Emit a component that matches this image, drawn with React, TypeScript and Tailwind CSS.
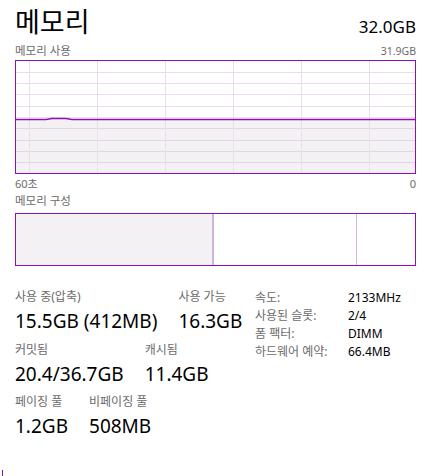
const font = { fontFamily: '"Segoe UI", "Noto Sans", "Noto Sans CJK KR", sans-serif' };

function UsageChart() {
  const w = 400;
  const h = 112;
  const vx = [13, 81, 149, 217, 285, 353];
  const hy = [11, 22, 33, 45, 56, 67, 79, 90, 101];
  const lineY = 58;
  return (
    <div className="border border-[#8b12ae] h-[114px] w-[401px]">
      <svg width={w - 1} height={h} viewBox={`0 0 ${w - 1} ${h}`} className="block">
        <path d={`M0 ${lineY} L${w} ${lineY} L${w} ${h} L0 ${h} Z`} fill="#f3f1f4" />
        {hy.map(y => (
          <line key={y} x1={0} x2={w} y1={y + 0.5} y2={y + 0.5} stroke={y > lineY ? '#e2d6e6' : '#eddbf2'} strokeWidth={1} />
        ))}
        {vx.map(x => (
          <line key={x} x1={x + 0.5} x2={x + 0.5} y1={0} y2={h} stroke="#ecdcef" strokeWidth={1} />
        ))}
        <path d={`M0 ${lineY + 0.5} L30 ${lineY + 0.5} L36 ${lineY - 0.5} L50 ${lineY - 0.5} L56 ${lineY + 0.5} L${w} ${lineY + 0.5}`} fill="none" stroke="#8b12ae" strokeWidth={1.4} />
      </svg>
    </div>
  );
}

function Stat({ label, value }: { label: string; value: string }) {
  return (
    <div className="flex flex-col">
      <div className="text-[12px] leading-[16px] text-[#6b6b6b] whitespace-nowrap">{label}</div>
      <div className="text-[19px] leading-[24px] text-black whitespace-nowrap mt-[4px]">{value}</div>
    </div>
  );
}

export default function App() {
  const specs = [
    ['속도:', '2133MHz'],
    ['사용된 슬롯:', '2/4'],
    ['폼 팩터:', 'DIMM'],
    ['하드웨어 예약:', '66.4MB'],
  ];
  return (
    <main className="relative w-[425px] h-[476px] bg-white overflow-hidden" style={font}>
      <div className="pl-[15px] pr-[9px] pt-[2px]">
        {/* Header */}
        <div className="flex items-end justify-between">
          <h1 className="text-[27px] leading-[40px] text-black">메모리</h1>
          <div className="text-[17px] leading-[24px] text-black mb-[3px]">32.0GB</div>
        </div>
        <div className="flex items-end justify-between text-[#6b6b6b] mt-[1px]">
          <span className="text-[11.5px] leading-[16px]">메모리 사용</span>
          <span className="text-[10.5px] leading-[16px]">31.9GB</span>
        </div>

        <div className="mt-[1px]">
          <UsageChart />
        </div>
        <div className="flex justify-between text-[11px] leading-[16px] text-[#6b6b6b] mt-[2px]">
          <span>60초</span>
          <span>0</span>
        </div>

        <div className="text-[11.5px] leading-[16px] text-[#6b6b6b] mt-[1px]">메모리 구성</div>
        <div className="mt-[4px] border border-[#8b12ae] h-[53px] w-[401px] flex">
          <div className="w-[198px] bg-[#f3f1f4] border-r-2 border-[#cfb2dc]" />
          <div className="w-[143px] border-r border-[#d9b8e6]" />
          <div className="flex-1" />
        </div>

        {/* Stats */}
        <div className="flex items-start mt-[23px]">
          <div className="flex flex-col w-[240px]">
            <div className="flex gap-[21px]">
              <Stat label="사용 중(압축)" value="15.5GB (412MB)" />
              <Stat label="사용 가능" value="16.3GB" />
            </div>
            <div className="flex gap-[21px] mt-[9px]">
              <Stat label="커밋됨" value="20.4/36.7GB" />
              <Stat label="캐시됨" value="11.4GB" />
            </div>
            <div className="flex gap-[21px] mt-[8px]">
              <Stat label="페이징 풀" value="1.2GB" />
              <Stat label="비페이징 풀" value="508MB" />
            </div>
          </div>
          <div className="grid grid-cols-[93px_auto] content-start text-[12px] leading-[18px]">
            {specs.map(([k, v]) => (
              <div key={k} className="contents">
                <span className="text-[#6b6b6b] whitespace-nowrap">{k}</span>
                <span className="text-black whitespace-nowrap">{v}</span>
              </div>
            ))}
          </div>
        </div>
      </div>
      <div className="absolute left-[2px] bottom-0 w-px h-[6px] bg-[#8b12ae]" />
    </main>
  );
}
